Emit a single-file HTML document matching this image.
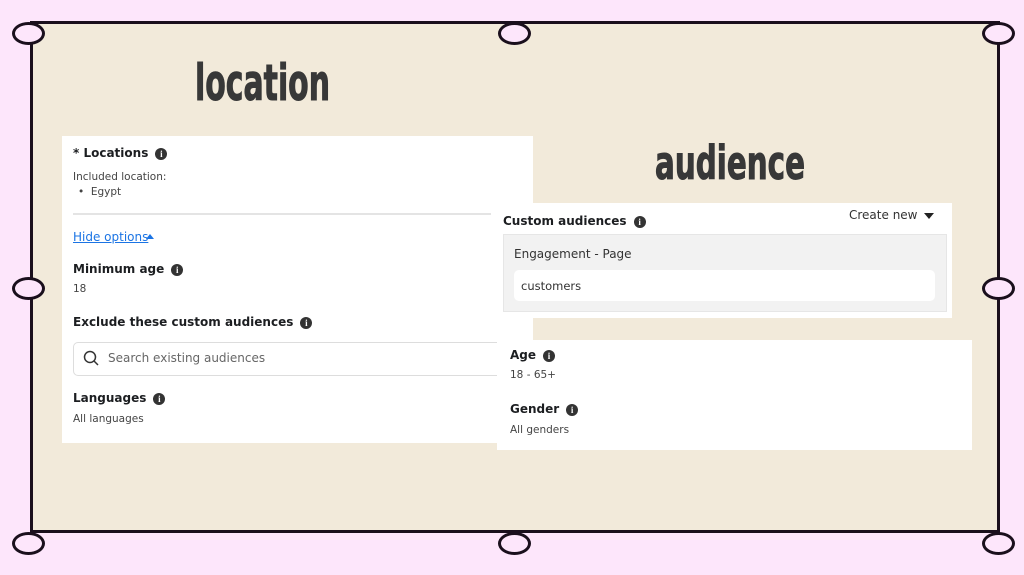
<!DOCTYPE html>
<html><head><meta charset="utf-8"><style>
*{margin:0;padding:0;box-sizing:border-box}
body{width:1024px;height:575px;background:#fde6fb;position:relative;overflow:hidden;font-family:"DejaVu Sans","Liberation Sans",sans-serif;color:#1c1e21}
.abs{position:absolute}
.frame{left:30px;top:21px;width:970px;height:512px;background:#f2eada;border:3px solid #1a0f1c}
.c{position:absolute;width:33px;height:23px;border:3px solid #1a0f1c;border-radius:50%;background:#fde6fb;margin:-11px 0 0 -16px}
.panel{background:#fff}
.h{font-weight:bold;font-size:12px;position:absolute;white-space:nowrap}
.s{font-size:10.5px;color:#444;position:absolute;white-space:nowrap}
.i{display:inline-block;width:12px;height:12px;border-radius:50%;background:#333;color:#fff;font-size:9px;line-height:12px;text-align:center;font-weight:bold;margin-left:7px;vertical-align:0px;font-family:"Liberation Serif",serif}
</style></head><body>
<div class="abs frame"></div>
<div class="c" style="left:28px;top:33px"></div>
<div class="c" style="left:514px;top:33px"></div>
<div class="c" style="left:998px;top:33px"></div>
<div class="c" style="left:28px;top:288px"></div>
<div class="c" style="left:998px;top:288px"></div>
<div class="c" style="left:28px;top:543px"></div>
<div class="c" style="left:514px;top:543px"></div>
<div class="c" style="left:998px;top:543px"></div>

<svg class="abs" style="left:0;top:0" width="1024" height="575">
<text x="195" y="100" font-family="DejaVu Sans Condensed, DejaVu Sans, sans-serif" font-weight="bold" font-size="50" fill="#383838" stroke="#383838" stroke-width="1" textLength="135" lengthAdjust="spacingAndGlyphs">location</text>
<text x="655" y="179" font-family="DejaVu Sans Condensed, DejaVu Sans, sans-serif" font-weight="bold" font-size="46" fill="#383838" stroke="#383838" stroke-width="1" textLength="150" lengthAdjust="spacingAndGlyphs">audience</text>
</svg>

<div class="abs panel" style="left:62px;top:136px;width:471px;height:307px"></div>
<div class="h" style="left:73px;top:146px">* Locations<span class="i">i</span></div>
<div class="s" style="left:73px;top:171px">Included location:</div>
<div class="s" style="left:78px;top:186px">•&nbsp;&nbsp;Egypt</div>
<div class="abs" style="left:73px;top:213px;width:418px;height:2px;background:#e4e4e4"></div>
<div class="abs" style="left:73px;top:230px;font-size:12px;color:#1b74e4;text-decoration:underline">Hide options</div>
<div class="abs" style="left:146px;top:234px;width:0;height:0;border-left:4px solid transparent;border-right:4px solid transparent;border-bottom:5px solid #1b74e4"></div>
<div class="h" style="left:73px;top:262px">Minimum age<span class="i">i</span></div>
<div class="s" style="left:73px;top:283px">18</div>
<div class="h" style="left:73px;top:315px">Exclude these custom audiences<span class="i">i</span></div>
<div class="abs" style="left:73px;top:342px;width:440px;height:34px;border:1px solid #ddd;border-radius:5px"></div>
<svg class="abs" style="left:83px;top:350px" width="16" height="16"><circle cx="7" cy="7" r="5.5" fill="none" stroke="#333" stroke-width="1.5"/><path d="M11 11l4 4" stroke="#333" stroke-width="1.5"/></svg>
<div class="abs" style="left:108px;top:351px;font-size:12px;color:#666">Search existing audiences</div>
<div class="h" style="left:73px;top:391px">Languages<span class="i">i</span></div>
<div class="s" style="left:73px;top:413px">All languages</div>

<div class="abs panel" style="left:497px;top:203px;width:455px;height:115px"></div>
<div class="h" style="left:503px;top:214px">Custom audiences<span class="i">i</span></div>
<div class="abs" style="left:849px;top:208px;font-size:12px;color:#333">Create new</div>
<div class="abs" style="left:924px;top:213px;width:0;height:0;border-left:5px solid transparent;border-right:5px solid transparent;border-top:6px solid #222"></div>
<div class="abs" style="left:503px;top:234px;width:444px;height:78px;background:#f2f2f2;border:1px solid #e6e6e6"></div>
<div class="abs" style="left:514px;top:247px;font-size:12px;color:#333">Engagement - Page</div>
<div class="abs" style="left:514px;top:270px;width:421px;height:31px;background:#fff;border-radius:5px"></div>
<div class="abs" style="left:521px;top:279px;font-size:11.5px;color:#333">customers</div>

<div class="abs panel" style="left:497px;top:340px;width:475px;height:110px"></div>
<div class="h" style="left:510px;top:348px">Age<span class="i">i</span></div>
<div class="s" style="left:510px;top:369px">18 - 65+</div>
<div class="h" style="left:510px;top:402px">Gender<span class="i">i</span></div>
<div class="s" style="left:510px;top:424px">All genders</div>
</body></html>
